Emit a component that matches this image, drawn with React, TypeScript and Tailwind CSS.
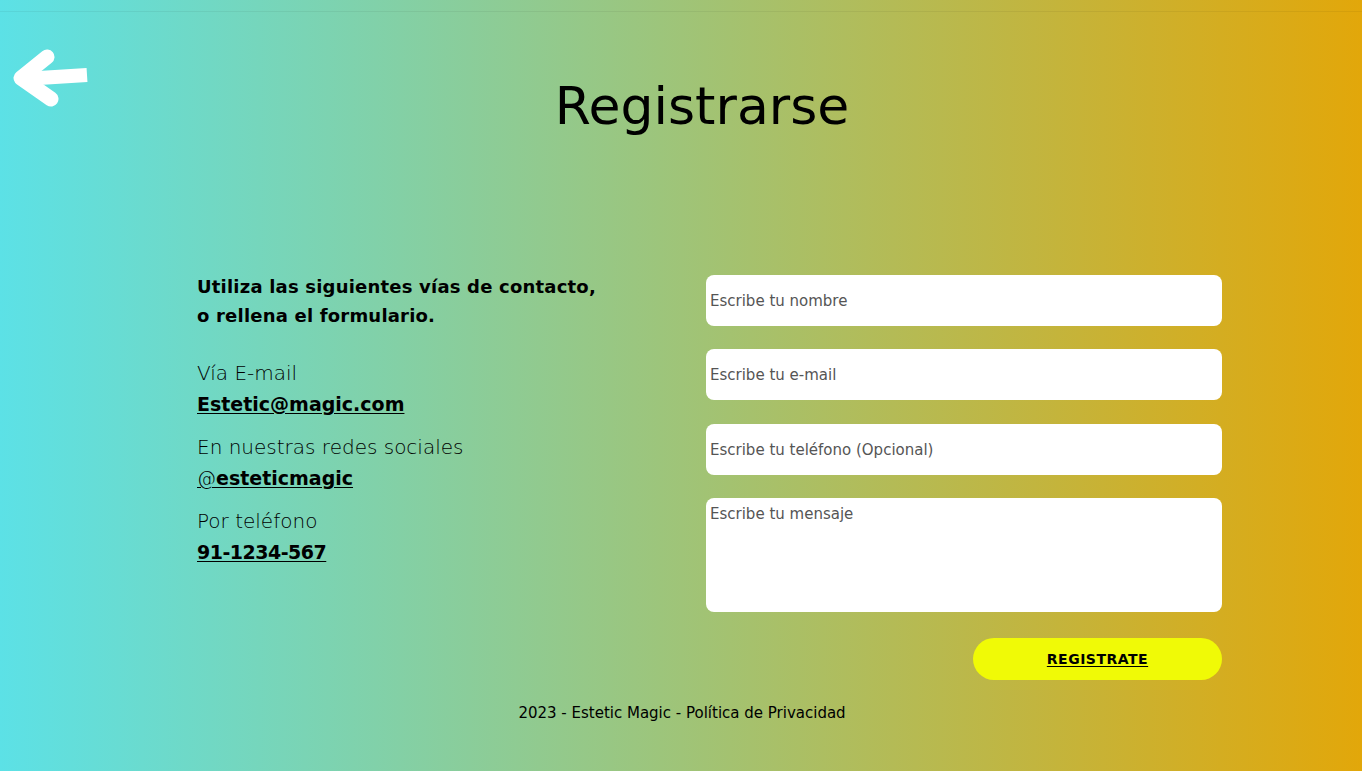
export default function App() {
  const field =
    "h-[51px] rounded-[8px] bg-white px-[4px] text-[15px] font-['DejaVu_Sans',sans-serif] outline-none placeholder:text-[#555]";

  return (
    <div className="relative w-full min-h-[771px] bg-[linear-gradient(to_right,#5ce1e6,#e2a70a)] text-black font-['DejaVu_Sans',sans-serif]">
      <div className="h-[12px] border-b border-black/5" />

      {/* back arrow */}
      <a href="#" className="absolute left-[11px] top-[45px]">
        <svg width="82" height="66" viewBox="0 0 82 66" fill="none">
          <path d="M36 12 L10 33 L40 54" stroke="white" strokeWidth="15" strokeLinecap="round" strokeLinejoin="round" />
          <path d="M12 34 L76 30" stroke="white" strokeWidth="14" />
        </svg>
      </a>

      <h1 className="pt-[64px] pl-[42px] text-center text-[52px] font-medium leading-[60px]">
        Registrarse
      </h1>

      <div className="mt-[139px] flex pl-[197px]">
        <div className="-mt-[3px] w-[509px]">
          <p className="text-[18px] font-semibold leading-[29px] tracking-[0.2px]">
            Utiliza las siguientes vías de contacto,
            <br />o rellena el formulario.
          </p>

          <div className="mt-[28px] text-[19px] leading-[31px]">
            <p className="font-light text-[20px]">Vía E-mail</p>
            <a href="#" className="font-bold underline underline-offset-2">Estetic@magic.com</a>
          </div>
          <div className="mt-[12px] text-[19px] leading-[31px]">
            <p className="font-light text-[20px]">En nuestras redes sociales</p>
            <a href="#" className="font-bold underline underline-offset-2">
              <span className="font-light">@</span>esteticmagic
            </a>
          </div>
          <div className="mt-[12px] text-[19px] leading-[31px]">
            <p className="font-light text-[20px]">Por teléfono</p>
            <a href="#" className="font-bold underline underline-offset-2 tracking-[-0.5px]">91-1234-567</a>
          </div>
        </div>

        <form className="flex w-[516px] flex-col">
          <input placeholder="Escribe tu nombre" className={field} />
          <input placeholder="Escribe tu e-mail" className={`mt-[23px] ${field}`} />
          <input placeholder="Escribe tu teléfono (Opcional)" className={`mt-[24px] ${field}`} />
          <textarea
            placeholder="Escribe tu mensaje"
            className="mt-[23px] h-[114px] resize-none rounded-[8px] bg-white px-[4px] pt-[5px] text-[15px] font-['DejaVu_Sans',sans-serif] outline-none placeholder:text-[#555]"
          />
          <div className="mt-[26px] flex justify-end">
            <button
              type="button"
              className="h-[42px] w-[249px] rounded-full bg-[#f0fa06] text-[14px] font-bold tracking-[0.5px] underline underline-offset-2"
            >
              REGISTRATE
            </button>
          </div>
        </form>
      </div>

      <footer className="mt-[23px] text-center text-[15px] leading-[20px] pl-[2px]">
        2023 - Estetic Magic - Política de Privacidad
      </footer>
    </div>
  );
}
